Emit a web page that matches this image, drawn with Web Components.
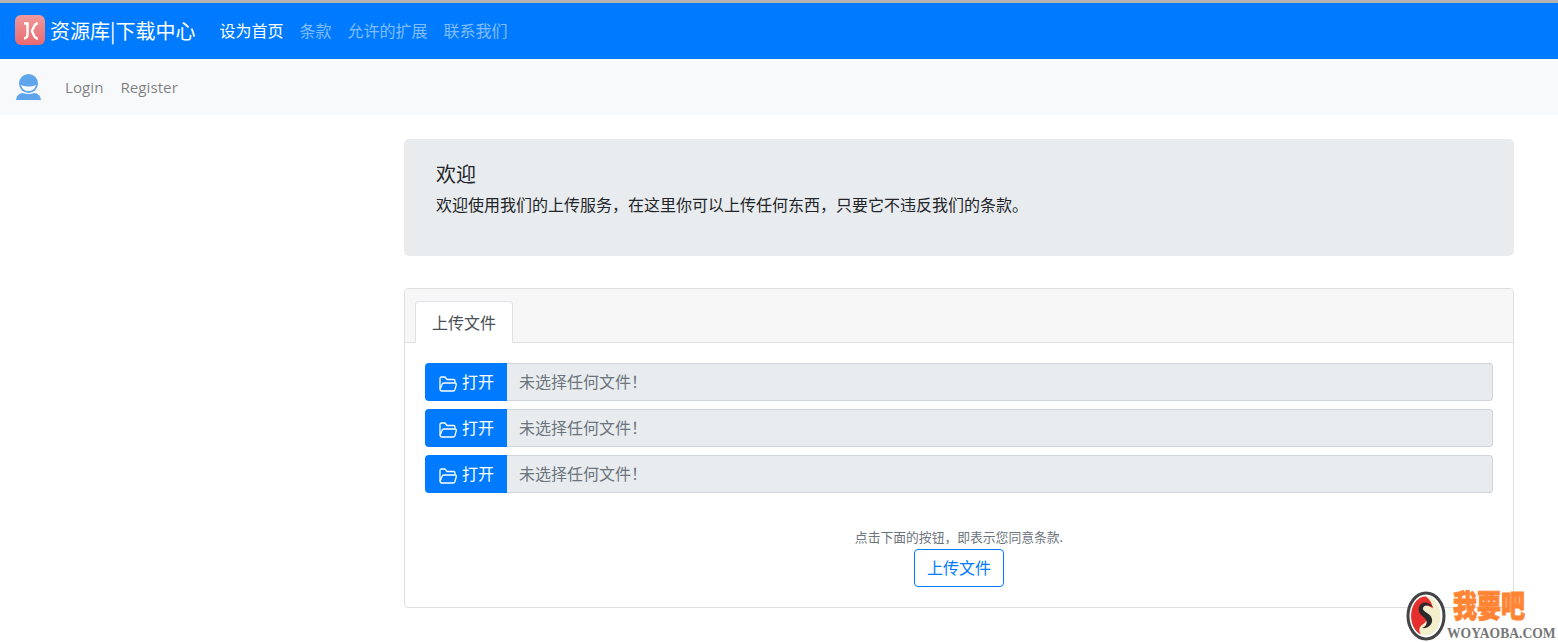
<!DOCTYPE html>
<html lang="zh">
<head>
<meta charset="utf-8">
<title>资源库|下载中心</title>
<style>
  html, body { margin: 0; height: 100%; }
  body {
    position: relative;
    height: 642px;
    overflow: hidden;
    background: #fff;
    color: #212529;
    font: 16px/1.5 "Open Sans", "Noto Sans CJK SC", sans-serif;
    border-top: 3px solid #b4b4b4;
    box-sizing: border-box;
  }
</style>
</head>
<body>
<top-nav>
  <a slot="links" class="on">设为首页</a>
  <a slot="links">条款</a>
  <a slot="links">允许的扩展</a>
  <a slot="links">联系我们</a>
</top-nav>
<user-nav></user-nav>
<main-col>
  <welcome-box heading="欢迎">欢迎使用我们的上传服务，在这里你可以上传任何东西，只要它不违反我们的条款。</welcome-box>
  <upload-card tab="上传文件">
    <file-row></file-row>
    <file-row></file-row>
    <file-row></file-row>
  </upload-card>
</main-col>
<wm-badge></wm-badge>

<script>
const CJK = '"Noto Sans CJK SC", sans-serif';

class TopNav extends HTMLElement {
  constructor() {
    super();
    const root = this.attachShadow({ mode: 'open' });
    root.innerHTML = `
      <style>
        :host {
          display: flex;
          align-items: center;
          height: 56px;
          padding: 0 15px;
          background: #007bff;
          font-family: ${CJK};
        }
        .brand {
          display: flex;
          align-items: center;
          gap: 5px;
          margin-right: 24px;
          color: #fff;
          font-size: 20px;
          white-space: nowrap;
        }
        svg { display: block; margin-bottom: 2px; }
        nav { display: flex; gap: 16px; padding-bottom: 2px; }
        ::slotted(a) { color: rgba(255,255,255,.5); font-size: 16px; }
        ::slotted(a.on) { color: #fff; }
      </style>
      <div class="brand">
        <svg width="30" height="30" viewBox="0 0 30 30">
          <defs>
            <linearGradient id="k" x1="0" y1="0" x2="0" y2="1">
              <stop offset="0" stop-color="#f09a9c"/>
              <stop offset="1" stop-color="#e8696f"/>
            </linearGradient>
          </defs>
          <rect width="30" height="30" rx="6" fill="url(#k)"/>
          <path d="M9 8.500h3.500v11q0 3.500-3.500 4" fill="none" stroke="#fff" stroke-width="2.400"/>
          <path d="M23 8.500h-1q-2 .5-3 3l-2 4.500 2 4.500q1 2.500 3 3h1" fill="none" stroke="#fff" stroke-width="2.400"/>
        </svg>
        <span>资源库|下载中心</span>
      </div>
      <nav><slot name="links"></slot></nav>
    `;
  }
}

class UserNav extends HTMLElement {
  constructor() {
    super();
    const root = this.attachShadow({ mode: 'open' });
    root.innerHTML = `
      <style>
        :host {
          display: flex;
          align-items: center;
          height: 56px;
          padding: 0 16px;
          background: #f8f9fa;
          color: rgba(0,0,0,.5);
          font-family: "Open Sans", ${CJK};
          font-size: 15.200px;
        }
        svg { display: block; margin-right: 24px; }
        a { margin-right: 17px; }
      </style>
      <svg width="25" height="26" viewBox="0 0 25 26">
        <circle cx="12.500" cy="9.500" r="9.500" fill="#5fa5ec"/>
        <path d="M5 11q7.500 3 15 0q-1.500 6-7.500 6t-7.500-6z" fill="#f8f9fa"/>
        <path d="M0 26q.5-6 6.500-7q6 2 12 0q6 1 6.500 7z" fill="#5fa5ec"/>
      </svg>
      <a>Login</a>
      <a>Register</a>
    `;
  }
}

class MainCol extends HTMLElement {
  constructor() {
    super();
    const root = this.attachShadow({ mode: 'open' });
    root.innerHTML = `
      <style>
        :host {
          display: flex;
          flex-direction: column;
          gap: 32px;
          margin: 24px 44px 0 404px;
        }
      </style>
      <slot></slot>
    `;
  }
}

class WelcomeBox extends HTMLElement {
  constructor() {
    super();
    const root = this.attachShadow({ mode: 'open' });
    root.innerHTML = `
      <style>
        :host {
          display: block;
          box-sizing: border-box;
          height: 117px;
          padding: 20px 32px;
          background: #e9ecef;
          border-radius: 5px;
          font-family: ${CJK};
        }
        h4 { margin: 0 0 3px; font-size: 20px; font-weight: 400; line-height: 30px; }
        p { margin: 0; font-size: 16px; line-height: 24px; }
      </style>
      <h4></h4>
      <p><slot></slot></p>
    `;
    root.querySelector('h4').textContent = this.getAttribute('heading');
  }
}

class UploadCard extends HTMLElement {
  constructor() {
    super();
    const root = this.attachShadow({ mode: 'open' });
    root.innerHTML = `
      <style>
        :host {
          display: block;
          box-sizing: border-box;
          height: 320px;
          border: 1px solid #dfdfdf;
          border-radius: 4px;
          font-family: ${CJK};
        }
        .head {
          display: flex;
          box-sizing: border-box;
          height: 54px;
          padding: 12px 10px 0;
          background: #f7f7f7;
          border-bottom: 1px solid #dfdfdf;
          border-radius: 4px 4px 0 0;
        }
        .tab {
          box-sizing: border-box;
          width: 98px;
          height: 42px;
          background: #fff;
          border: 1px solid #dee2e6;
          border-bottom: 0;
          border-radius: 4px 4px 0 0;
          color: #495057;
          text-align: center;
          line-height: 40px;
        }
        .body {
          display: flex;
          flex-direction: column;
          gap: 8px;
          padding: 20px 20px 0;
        }
        .agree {
          display: flex;
          flex-direction: column;
          align-items: center;
          margin-top: 26px;
        }
        small { font-size: 12.800px; line-height: 19px; color: #6c757d; }
        button {
          box-sizing: border-box;
          width: 90px;
          height: 38px;
          margin-top: 3px;
          padding: 0 0 2px;
          background: #fff;
          border: 1px solid #007bff;
          border-radius: 4px;
          color: #007bff;
          font: inherit;
        }
      </style>
      <div class="head"><div class="tab"></div></div>
      <div class="body">
        <slot></slot>
        <div class="agree">
          <small>点击下面的按钮，即表示您同意条款.</small>
          <button></button>
        </div>
      </div>
    `;
    const label = this.getAttribute('tab');
    root.querySelector('.tab').textContent = label;
    root.querySelector('button').textContent = label;
  }
}

class FileRow extends HTMLElement {
  constructor() {
    super();
    const root = this.attachShadow({ mode: 'open' });
    root.innerHTML = `
      <style>
        :host {
          display: flex;
          height: 38px;
          font-family: ${CJK};
        }
        .open {
          display: flex;
          align-items: center;
          gap: 5px;
          box-sizing: border-box;
          width: 82px;
          padding-left: 14px;
          background: #007bff;
          border-radius: 4px 0 0 4px;
          color: #fff;
        }
        .open span { margin-top: -2px; }
        svg { display: block; margin-top: 3px; }
        .name {
          flex: 1;
          box-sizing: border-box;
          padding-left: 12px;
          background: #e9ecef;
          border: 1px solid #ced4da;
          border-left: 0;
          border-radius: 0 4px 4px 0;
          color: #6c757d;
          line-height: 34px;
        }
      </style>
      <div class="open">
        <svg width="18" height="16" viewBox="0 0 18 16" fill="none" stroke="#fff" stroke-width="1.300">
          <path d="M1 13V2.500Q1 1 2.500 1h3.500l2 2.500h6.500q1.500 0 1.500 1.500v1.500"/>
          <path d="M1 13.500q.3 1.500 2 1.500h11q1.500 0 2-1.500l1.300-5q.2-1.500-1.300-1.500H5q-1.500 0-2 1.500L1 13.500z"/>
        </svg>
        <span>打开</span>
      </div>
      <div class="name">未选择任何文件！</div>
    `;
  }
}

class WmBadge extends HTMLElement {
  constructor() {
    super();
    const root = this.attachShadow({ mode: 'open' });
    root.innerHTML = `
      <style>
        :host {
          position: absolute;
          right: 0;
          bottom: 0;
          width: 152px;
          height: 51px;
        }
        svg { position: absolute; left: 0; top: 0; }
        .cn {
          position: absolute;
          left: 47px;
          top: 0;
          color: #ff8534;
          font: 900 24px/24px "Liberation Sans", ${CJK};
          -webkit-text-stroke: .7px #ff8534;
          white-space: nowrap;
          transform: scaleY(1.280);
          transform-origin: top left;
        }
        .en {
          position: absolute;
          left: 41px;
          top: 35px;
          color: #777;
          font: 700 13.600px/15px "Liberation Serif", serif;
          white-space: nowrap;
        }
      </style>
      <svg width="40" height="50" viewBox="0 0 40 50">
        <ellipse cx="20" cy="25" rx="19" ry="24" fill="#fff"/>
        <ellipse cx="20" cy="25" rx="18" ry="23" fill="none" stroke="#444" stroke-width="3"/>
        <ellipse cx="20" cy="25" rx="14.500" ry="19.500" fill="#f3eecb"/>
        <path d="M20 5.500a14.500 19.500 0 0 0-5 38c-4-6 0-9 3-11 4-3 3-7 0-9-3-2-3-8 2-9 3 0 5 2 7 3-1-5-3-9-7-12z" fill="#e5302d"/>
        <path d="M13 16c2-6 10-6 14 0-4-2-9-3-10 1s8 5 9 11-5 10-10 9c3-1 6-4 4-8s-9-6-7-13z" fill="#2a2a2a"/>
      </svg>
      <span class="cn">我要吧</span>
      <span class="en">WOYAOBA.COM</span>
    `;
  }
}

customElements.define('top-nav', TopNav);
customElements.define('user-nav', UserNav);
customElements.define('main-col', MainCol);
customElements.define('welcome-box', WelcomeBox);
customElements.define('upload-card', UploadCard);
customElements.define('file-row', FileRow);
customElements.define('wm-badge', WmBadge);
</script>
</body>
</html>
